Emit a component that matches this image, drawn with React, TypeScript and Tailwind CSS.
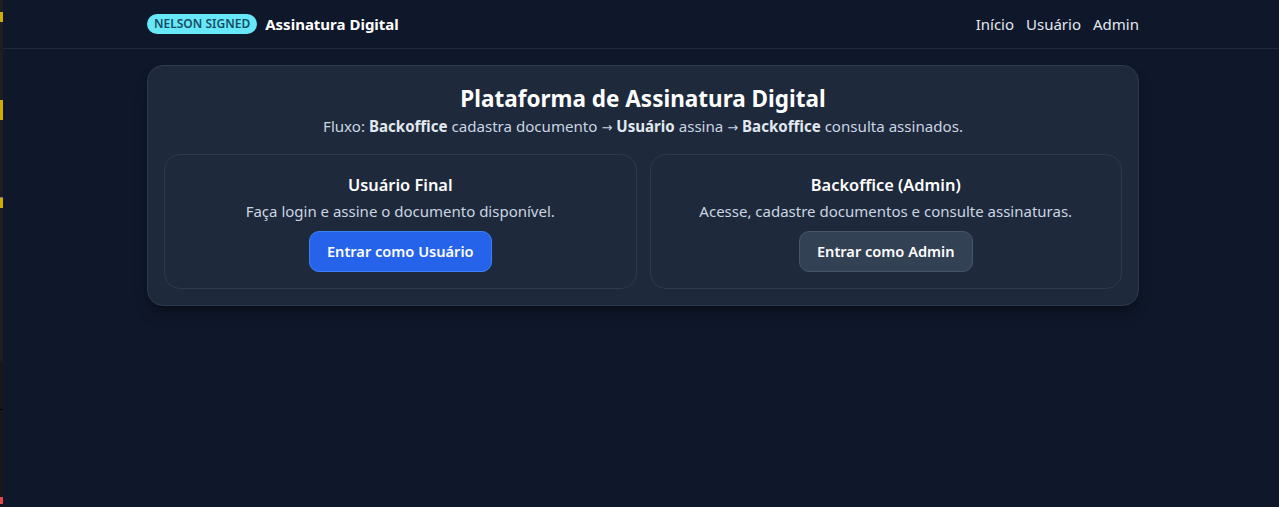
import React from "react";

const font = { fontFamily: '"Noto Sans", "Open Sans", sans-serif' };

function Arrow() {
  return <span className="font-['DejaVu_Sans',sans-serif] text-[13px] leading-none">→</span>;
}

export default function App() {
  return (
    <div className="flex min-h-[507px] w-full bg-[#0f172a] text-[#f1f5f9]" style={font}>
      <div className="flex w-[3px] shrink-0 flex-col bg-[#1e1e1e]">
        <div className="h-[12px]" />
        <div className="h-[10px] bg-[#d4aa00]" />
        <div className="h-[78px]" />
        <div className="h-[20px] bg-[#d4aa00]" />
        <div className="h-[77px]" />
        <div className="h-[1px] bg-[#777777]" />
        <div className="h-[10px] bg-[#d4aa00]" />
        <div className="h-[153px]" />
        <div className="h-[48px] bg-[#181818]" />
        <div className="h-[1px] bg-[#000000]" />
        <div className="h-[87px] bg-[#181818]" />
        <div className="h-[7px] bg-[#e04848]" />
        <div className="flex-1 bg-[#181818]" />
      </div>
      <div className="flex flex-1 flex-col">
        <header className="h-[49px] border-b border-[#1e293b]">
          <div className="ml-[144px] flex h-[48px] w-[992px] items-center justify-between">
            <div className="flex items-center gap-2">
              <span className="rounded-full bg-[#67e8f9] px-[7px] py-[1px] text-[12px] font-semibold leading-[18px] text-[#164e63]">
                NELSON SIGNED
              </span>
              <span className="text-[15px] font-bold text-white">Assinatura Digital</span>
            </div>
            <nav className="flex items-center gap-3 text-[15px] text-[#e2e8f0]">
              <span>Início</span>
              <span>Usuário</span>
              <span>Admin</span>
            </nav>
          </div>
        </header>
        <main className="ml-[144px] mt-4 w-[992px]">
          <div className="rounded-2xl border border-[#2c3a4f] bg-[#1e293b] p-4 shadow-lg shadow-black/30">
            <h1 className="pt-[2px] text-center text-[22.5px] font-bold leading-[30px] text-white">
              Plataforma de Assinatura Digital
            </h1>
            <p className="h-6 text-center text-[15.1px] leading-6 text-[#cbd5e1]">
              Fluxo: <b className="text-[#e2e8f0]">Backoffice</b> cadastra documento <Arrow /> <b className="text-[#e2e8f0]">Usuário</b> assina <Arrow /> <b className="text-[#e2e8f0]">Backoffice</b> consulta assinados.
            </p>
            <div className="mt-4 grid grid-cols-2 gap-[13px]">
              <div className="flex flex-col items-center rounded-2xl border border-[#2c3a4f] bg-[#1e293b] p-4">
                <h2 className="text-[16.4px] font-semibold leading-7 text-white">Usuário Final</h2>
                <p className="text-[15px] leading-6 text-[#cbd5e1]">Faça login e assine o documento disponível.</p>
                <button className="mt-2 h-[41px] rounded-[10px] border border-[#3b82f6] bg-[#2563eb] px-[17px] text-[14.6px] font-semibold text-white">
                  Entrar como Usuário
                </button>
              </div>
              <div className="flex flex-col items-center rounded-2xl border border-[#2c3a4f] bg-[#1e293b] p-4">
                <h2 className="text-[16.4px] font-semibold leading-7 text-white">Backoffice (Admin)</h2>
                <p className="text-[15px] leading-6 text-[#cbd5e1]">Acesse, cadastre documentos e consulte assinaturas.</p>
                <button className="mt-2 h-[41px] rounded-[10px] border border-[#475569] bg-[#334155] px-[17px] text-[14.6px] font-semibold text-white">
                  Entrar como Admin
                </button>
              </div>
            </div>
          </div>
        </main>
      </div>
    </div>
  );
}
